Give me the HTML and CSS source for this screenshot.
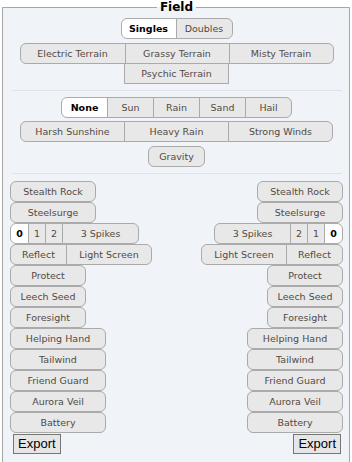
FILE: index.html
```html
<!DOCTYPE html>
<html>
<head>
<meta charset="utf-8">
<link rel="stylesheet" href="styles.css">
</head>
<body>
<fieldset class="field">
  <legend>Field</legend>
  <div class="row mode">
    <span class="btn rl sel w-singles">Singles</span><span class="btn rr w-doubles">Doubles</span>
  </div>
  <div class="row wrap terrain">
    <span class="btn rl w-terr1">Electric Terrain</span><span class="btn w-terr">Grassy Terrain</span><span class="btn rr w-terr">Misty Terrain</span>
    <span class="btn w-terr psychic">Psychic Terrain</span>
  </div>
  <hr class="sep">
  <div class="row weather">
    <span class="btn rl sel w-wx">None</span><span class="btn w-wx">Sun</span><span class="btn w-wx">Rain</span><span class="btn w-wx">Sand</span><span class="btn rr w-wx">Hail</span>
  </div>
  <div class="row strong">
    <span class="btn rl w-terr">Harsh Sunshine</span><span class="btn w-terr">Heavy Rain</span><span class="btn rr w-terr">Strong Winds</span>
  </div>
  <div class="row gravity">
    <span class="btn r w-grav">Gravity</span>
  </div>
  <hr class="sep sep2">
  <div class="sides">
    <div class="side left">
      <div class="line"><span class="btn r w-hz">Stealth Rock</span></div>
      <div class="line"><span class="btn r w-hz">Steelsurge</span></div>
      <div class="line"><span class="btn rl sel w-s0">0</span><span class="btn w-s1">1</span><span class="btn w-s1">2</span><span class="btn rr w-s3">3 Spikes</span></div>
      <div class="line"><span class="btn rl w-refl">Reflect</span><span class="btn rr w-ls">Light Screen</span></div>
      <div class="line"><span class="btn r w-pro">Protect</span></div>
      <div class="line"><span class="btn r w-pro">Leech Seed</span></div>
      <div class="line"><span class="btn r w-pro">Foresight</span></div>
      <div class="line"><span class="btn r w-hh">Helping Hand</span></div>
      <div class="line"><span class="btn r w-hh">Tailwind</span></div>
      <div class="line"><span class="btn r w-hh">Friend Guard</span></div>
      <div class="line"><span class="btn r w-hh">Aurora Veil</span></div>
      <div class="line"><span class="btn r w-hh">Battery</span></div>
      <div class="line"><button class="export">Export</button></div>
    </div>
    <div class="side right">
      <div class="line"><span class="btn r w-hz">Stealth Rock</span></div>
      <div class="line"><span class="btn r w-hz">Steelsurge</span></div>
      <div class="line"><span class="btn rl w-s3">3 Spikes</span><span class="btn w-s1">2</span><span class="btn w-s1">1</span><span class="btn rr sel w-s0">0</span></div>
      <div class="line"><span class="btn rl w-ls">Light Screen</span><span class="btn rr w-refl">Reflect</span></div>
      <div class="line"><span class="btn r w-pro">Protect</span></div>
      <div class="line"><span class="btn r w-pro">Leech Seed</span></div>
      <div class="line"><span class="btn r w-pro">Foresight</span></div>
      <div class="line"><span class="btn r w-hh">Helping Hand</span></div>
      <div class="line"><span class="btn r w-hh">Tailwind</span></div>
      <div class="line"><span class="btn r w-hh">Friend Guard</span></div>
      <div class="line"><span class="btn r w-hh">Aurora Veil</span></div>
      <div class="line"><span class="btn r w-hh">Battery</span></div>
      <div class="line"><button class="export export-r">Export</button></div>
    </div>
  </div>
</fieldset>
</body>
</html>
```
FILE: styles.css
```css
html, body {
  margin: 0;
  padding: 0;
  background: #ffffff;
}

.field {
  margin: 0 2px;
  padding: 0 6px 12px 7px;
  border: 1px solid #a6a6a6;
  background: #f0f3f8;
  font-family: "DejaVu Sans", Verdana, sans-serif;
  font-size: 9.5px;
  color: #555;
  min-height: 460px;
  box-sizing: border-box;
}

.field legend {
  margin: 0 auto;
  padding: 0 3px;
  font-family: "DejaVu Sans", Verdana, sans-serif;
  font-size: 12px;
  font-weight: bold;
  line-height: 14px;
  color: #000;
}

.row {
  display: flex;
  justify-content: center;
}

.wrap {
  flex-wrap: wrap;
}

.mode { margin-top: 4px; }
.terrain { margin-top: 4px; }
.weather { margin-top: 6px; }
.strong { margin-top: 3px; }
.gravity { margin-top: 4px; }

.sep {
  border: 0;
  border-top: 1px solid #dfe2e8;
  margin: 6px 1px 0 2px;
  height: 0;
}
.sep2 { margin-top: 6px; }

.btn {
  box-sizing: border-box;
  display: inline-block;
  height: 21px;
  line-height: 19px;
  border: 1px solid #aaaaaa;
  background: #e8e8e8;
  text-align: center;
  white-space: nowrap;
  color: #524a44;
}
.btn + .btn { margin-left: -1px; }
.btn.sel {
  background: #ffffff;
  color: #000;
  font-weight: bold;
}
.rl { border-radius: 6px 0 0 6px; }
.rr { border-radius: 0 6px 6px 0; }
.r { border-radius: 6px; }

.terrain .psychic { margin-left: 0; margin-top: -1px; }

.w-singles { width: 56px; }
.w-doubles { width: 57px; }
.w-terr1 { width: 106px; }
.w-terr { width: 105px; }
.w-wx { width: 47px; }
.w-grav { width: 57px; }
.w-hz { width: 86px; }
.w-s0 { width: 19px; }
.w-s1 { width: 18px; }
.w-s3 { width: 77px; }
.w-refl { width: 57px; }
.w-ls { width: 86px; }
.w-pro { width: 76px; }
.w-hh { width: 96px; }

.sides {
  display: flex;
  justify-content: space-between;
  margin-top: 7px;
}

.side {
  display: flex;
  flex-direction: column;
}
.side.left { align-items: flex-start; }
.side.right { align-items: flex-end; }

.line {
  display: flex;
}

.export {
  box-sizing: border-box;
  margin: 1px 0 0 3px;
  height: 20px;
  padding: 0 4px;
  border: 1px solid #767676;
  border-radius: 0;
  background: #e6e6e6;
  font-family: "Liberation Sans", Arial, sans-serif;
  font-size: 13px;
  line-height: 16px;
  color: #000;
}
.export-r { margin: 1px 2px 0 0; }
```
